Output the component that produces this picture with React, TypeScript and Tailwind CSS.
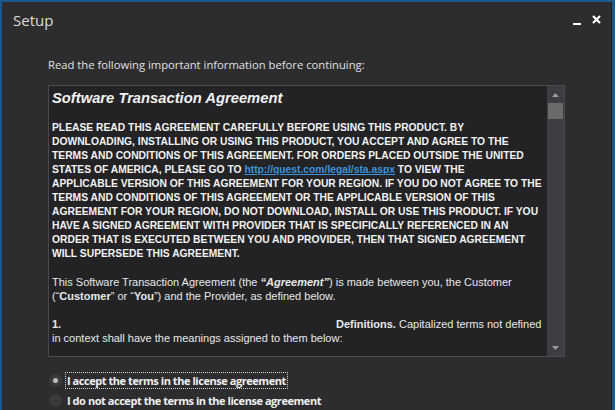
import React from "react";

const upper = [
  "PLEASE READ THIS AGREEMENT CAREFULLY BEFORE USING THIS PRODUCT. BY",
  "DOWNLOADING, INSTALLING OR USING THIS PRODUCT, YOU ACCEPT AND AGREE TO THE",
  "TERMS AND CONDITIONS OF THIS AGREEMENT. FOR ORDERS PLACED OUTSIDE THE UNITED",
  "LINK",
  "APPLICABLE VERSION OF THIS AGREEMENT FOR YOUR REGION. IF YOU DO NOT AGREE TO THE",
  "TERMS AND CONDITIONS OF THIS AGREEMENT OR THE APPLICABLE VERSION OF THIS",
  "AGREEMENT FOR YOUR REGION, DO NOT DOWNLOAD, INSTALL OR USE THIS PRODUCT. IF YOU",
  "HAVE A SIGNED AGREEMENT WITH PROVIDER THAT IS SPECIFICALLY REFERENCED IN AN",
  "ORDER THAT IS EXECUTED BETWEEN YOU AND PROVIDER, THEN THAT SIGNED AGREEMENT",
  "WILL SUPERSEDE THIS AGREEMENT.",
];

function ScrollBar() {
  return (
    <div className="flex w-[17px] flex-col bg-[#3e3e42]">
      <div className="flex h-[17px] items-center justify-center">
        <svg width="7" height="4" viewBox="0 0 7 4">
          <path d="M0 4 L3.5 0 L7 4 Z" fill="#9a9a9a" />
        </svg>
      </div>
      <div className="mx-[1px] h-[16px] bg-[#6a6a6a]" />
      <div className="flex-1" />
      <div className="flex h-[17px] items-center justify-center">
        <svg width="7" height="4" viewBox="0 0 7 4">
          <path d="M0 0 L3.5 4 L7 0 Z" fill="#9a9a9a" />
        </svg>
      </div>
    </div>
  );
}

function Radio({ checked, label, focus }: { checked?: boolean; label: string; focus?: boolean }) {
  return (
    <div className="flex h-[20px] items-center">
      <div className="ml-[1px] flex h-[13px] w-[13px] items-center justify-center rounded-full bg-[#3a3a3c]">
        {checked && <div className="h-[5px] w-[5px] rounded-full bg-[#bdbdbd]" />}
      </div>
      <div
        className={
          focus
            ? "ml-[3px] border border-dotted border-[#cfcfcf] px-[1px] leading-[15px]"
            : "ml-[4px] px-[1px] leading-[15px]"
        }
      >
        {label}
      </div>
    </div>
  );
}

export default function App() {
  return (
    <div className="h-[410px] w-[615px] overflow-hidden bg-[#1a5a8c] pl-[2px] pt-[2px] pr-[3px]">
      <div className="flex h-full flex-col border-r border-[#1d1d1f] bg-[#2d2d30] text-[#e6e6e6]">
        {/* title bar */}
        <div className="flex h-[36px] items-start justify-between pl-[11px] pr-[10px] pt-[8px]">
          <div className="font-['Open_Sans',sans-serif] text-[15px] leading-[20px] text-[#dcdcdc]">Setup</div>
          <div className="flex items-center gap-[11px] pt-[3px]">
            <div className="mt-[10px] h-[2px] w-[8px] bg-white" />
            <svg width="9" height="9" viewBox="0 0 9 9">
              <path d="M1 1 L8 8 M8 1 L1 8" stroke="white" strokeWidth="2.2" />
            </svg>
          </div>
        </div>

        <div className="pl-[46px] pr-[48px]">
          <div className="mt-[22px] font-['Open_Sans',sans-serif] text-[11.25px] leading-[14px] text-[#e0e0e0]">
            Read the following important information before continuing:
          </div>

          {/* agreement box */}
          <div className="mt-[13px] flex h-[272px] w-[517px] border border-[#4a4a4e] bg-[#232325]">
            <div className="flex-1 overflow-hidden pl-[3px] pt-[3px] font-['Liberation_Sans',Arial,sans-serif] text-[#f2f2f2]">
              <div className="text-[14.75px] font-bold italic leading-[18px]">Software Transaction Agreement</div>
              <div className="mt-[14px] text-[10.3px] font-bold leading-[14px]">
                {upper.map((l, i) =>
                  l === "LINK" ? (
                    <div key={i} className="whitespace-nowrap">
                      STATES OF AMERICA, PLEASE GO TO{" "}
                      <span className="text-[#3b93d9] underline">http://quest.com/legal/sta.aspx</span> TO VIEW THE
                    </div>
                  ) : (
                    <div key={i} className="whitespace-nowrap">
                      {l}
                    </div>
                  )
                )}
              </div>
              <div className="mt-[14px] text-[11px] leading-[14px] text-[#e8e8e8]">
                <div className="whitespace-nowrap">
                  This Software Transaction Agreement (the <b className="italic">“Agreement”</b>) is made between you, the
                  Customer
                </div>
                <div className="whitespace-nowrap">
                  (“<b>Customer</b>” or “<b>You</b>”) and the Provider, as defined below.
                </div>
              </div>
              <div className="mt-[14px] text-[11px] leading-[14px] text-[#e8e8e8]">
                <div className="flex whitespace-nowrap">
                  <b className="w-[284px]">1.</b>
                  <span>
                    <b>Definitions.</b> Capitalized terms not defined
                  </span>
                </div>
                <div className="whitespace-nowrap">in context shall have the meanings assigned to them below:</div>
              </div>
            </div>
            <ScrollBar />
          </div>

          {/* radios */}
          <div className="mt-[13px] flex flex-col font-['Open_Sans',sans-serif] text-[11px] font-bold tracking-[-0.45px] text-[#f0f0f0]">
            <Radio checked focus label="I accept the terms in the license agreement" />
            <Radio label="I do not accept the terms in the license agreement" />
          </div>
        </div>
      </div>
    </div>
  );
}
